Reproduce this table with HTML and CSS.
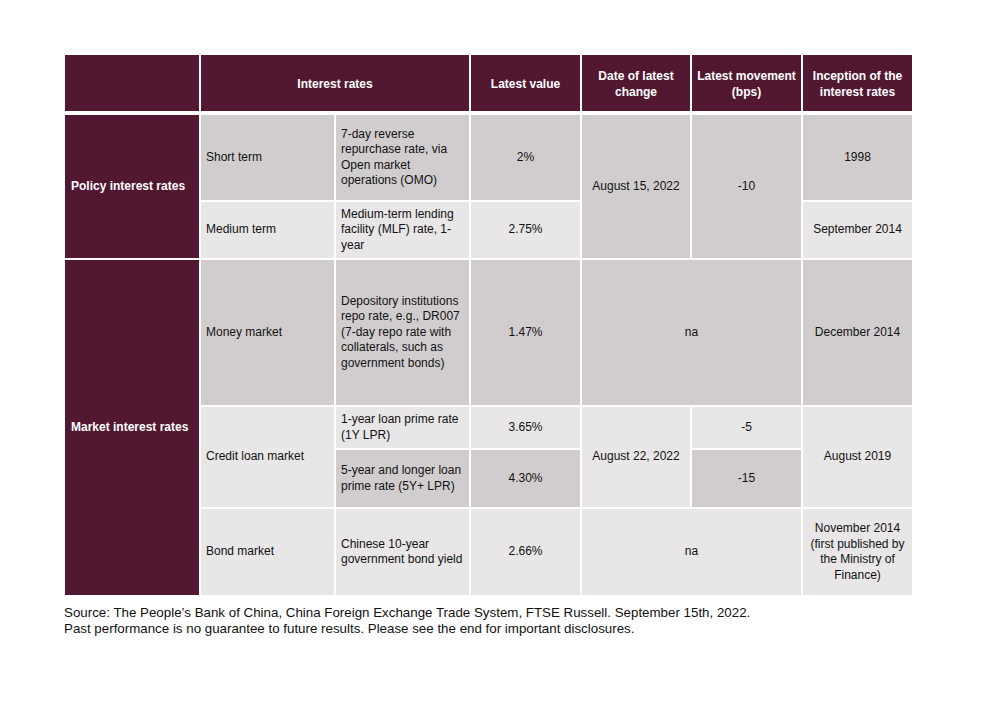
FILE: index.html
```html
<!DOCTYPE html>
<html lang="en">
<head>
<meta charset="utf-8">
<title>China interest rates</title>
<link rel="stylesheet" href="styles.css">
</head>
<body>
<div class="page">
  <table class="rates">
    <colgroup>
      <col class="c1"><col class="c2"><col class="c3"><col class="c4"><col class="c5"><col class="c6"><col class="c7">
    </colgroup>
    <thead>
      <tr class="r-head">
        <th></th>
        <th colspan="2">Interest rates</th>
        <th>Latest value</th>
        <th>Date of latest change</th>
        <th>Latest movement (bps)</th>
        <th>Inception of the interest rates</th>
      </tr>
    </thead>
    <tbody>
      <tr class="r-short">
        <td rowspan="2" class="group">Policy interest rates</td>
        <td class="dark left">Short term</td>
        <td class="dark left">7-day reverse repurchase rate, via Open market operations (OMO)</td>
        <td class="dark">2%</td>
        <td rowspan="2" class="dark">August 15, 2022</td>
        <td rowspan="2" class="dark">-10</td>
        <td class="dark">1998</td>
      </tr>
      <tr class="r-medium">
        <td class="light left">Medium term</td>
        <td class="light left">Medium-term lending facility (MLF) rate, 1-year</td>
        <td class="light">2.75%</td>
        <td class="light">September 2014</td>
      </tr>
      <tr class="r-money">
        <td rowspan="4" class="group">Market interest rates</td>
        <td class="dark left">Money market</td>
        <td class="dark left">Depository institutions repo rate, e.g., DR007 (7-day repo rate with collaterals, such as government bonds)</td>
        <td class="dark">1.47%</td>
        <td colspan="2" class="dark">na</td>
        <td class="dark">December 2014</td>
      </tr>
      <tr class="r-1y">
        <td rowspan="2" class="light left">Credit loan market</td>
        <td class="light left">1-year loan prime rate (1Y LPR)</td>
        <td class="light">3.65%</td>
        <td rowspan="2" class="light">August 22, 2022</td>
        <td class="light">-5</td>
        <td rowspan="2" class="light">August 2019</td>
      </tr>
      <tr class="r-5y">
        <td class="dark left">5-year and longer loan prime rate (5Y+ LPR)</td>
        <td class="dark">4.30%</td>
        <td class="dark">-15</td>
      </tr>
      <tr class="r-bond">
        <td class="light left">Bond market</td>
        <td class="light left">Chinese 10-year government bond yield</td>
        <td class="light">2.66%</td>
        <td colspan="2" class="light">na</td>
        <td class="light">November 2014 (first published by the Ministry of Finance)</td>
      </tr>
    </tbody>
  </table>
  <p class="note">Source: The People’s Bank of China, China Foreign Exchange Trade System, FTSE Russell. September 15th, 2022.<br>Past performance is no guarantee to future results. Please see the end for important disclosures.</p>
</div>
</body>
</html>
```

FILE: styles.css
```css
html, body {
  margin: 0;
  padding: 0;
  background: #ffffff;
}

body {
  font-family: "Liberation Sans", Arial, sans-serif;
  color: #111111;
}

.page {
  padding: 53px 0 0 63px;
}

.rates {
  border-collapse: separate;
  border-spacing: 2px;
  table-layout: fixed;
  width: 851px;
  font-size: 12px;
  line-height: 15.5px;
}

.c1 { width: 134px; }
.c2 { width: 133px; }
.c3 { width: 133px; }
.c4 { width: 109px; }
.c5 { width: 108px; }
.c6 { width: 109px; }
.c7 { width: 109px; }

.rates th {
  background: #521731;
  color: #ffffff;
  font-weight: bold;
  line-height: 16px;
  text-align: center;
  vertical-align: middle;
  padding: 1px 3px 0;
  height: 56px;
  box-sizing: border-box;
  border-bottom: 2px solid #ffffff;
  background-clip: padding-box;
}

.rates td {
  padding: 0 4px;
  text-align: center;
  vertical-align: middle;
  color: #111111;
}

.rates td.left {
  text-align: left;
  padding: 0 5px;
}

.rates td.group {
  background: #521731;
  color: #ffffff;
  font-weight: bold;
  text-align: left;
  padding: 0 6px;
}

.rates td.dark { background: #d1cdcf; }
.rates td.light { background: #e8e6e7; }

.r-head { height: 58px; }
.r-short { height: 85px; }
.r-medium { height: 56px; }
.r-money { height: 145px; }
.r-1y { height: 41px; }
.r-5y { height: 57px; }
.r-bond { height: 86px; }

.note {
  margin: 8px 0 0 1px;
  font-size: 13.33px;
  line-height: 15.5px;
  color: #111111;
}
```
